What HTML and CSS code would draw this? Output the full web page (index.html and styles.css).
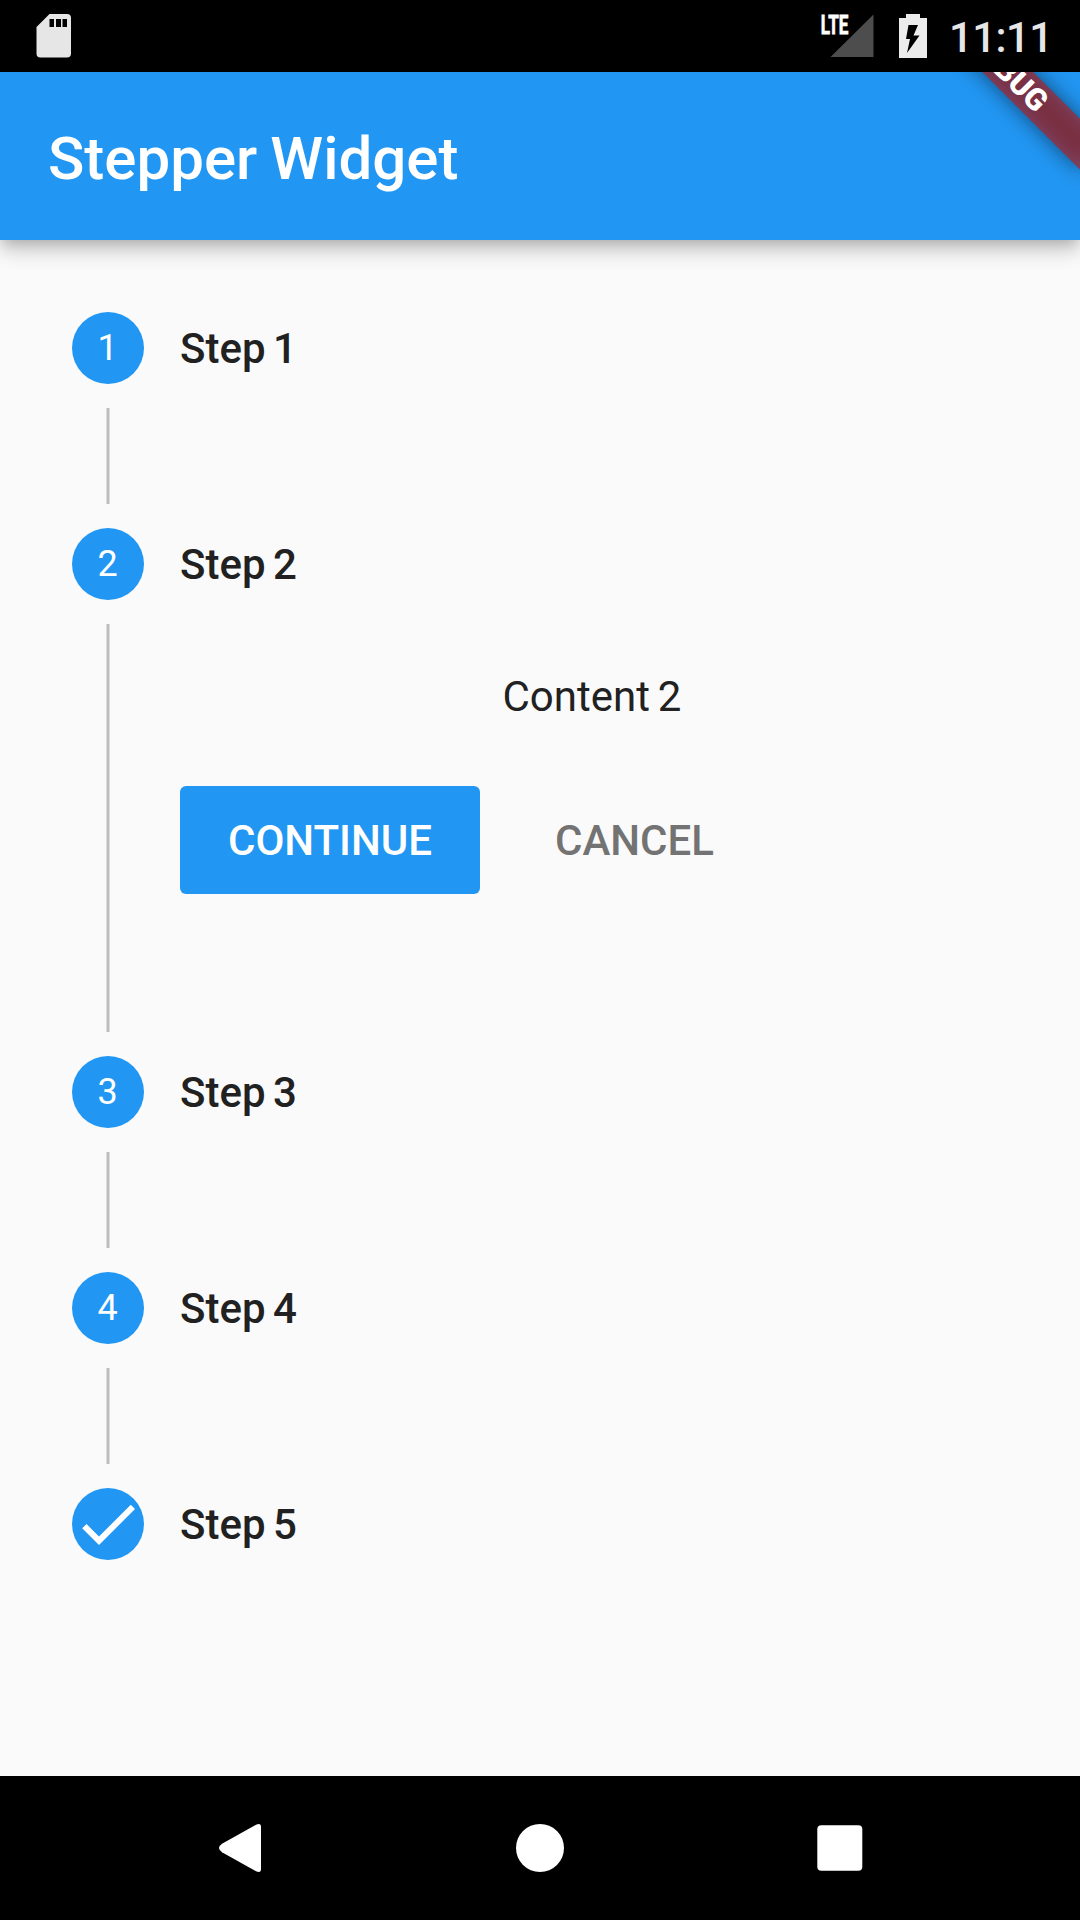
FILE: index.html
```html
<!DOCTYPE html>
<html lang="en">
<head>
<meta charset="utf-8">
<title>Stepper Widget</title>
<link rel="stylesheet" href="styles.css">
</head>
<body>
<div class="status-bar">
  <svg class="icon-sd" width="36" height="44" viewBox="0 0 36 44"><path fill="#e6e6e6" fill-rule="evenodd" d="M13.5 0H31Q35 0 35 4V39.500Q35 43.500 31 43.500H4.500Q.5 43.500 .5 39.500V13ZM13.500 5V13H18V5ZM20 5V13H25V5ZM26.500 5V13H31V5Z"/></svg>
  <div class="status-right">
    <svg class="icon-signal" width="54" height="44" viewBox="0 0 54 44">
      <path fill="#4d4d4d" d="M53.500 .5V43H10.500Z"/>
      <text class="lte" x=".8" y="19.500" textLength="27.500" lengthAdjust="spacingAndGlyphs">LTE</text>
    </svg>
    <svg class="icon-battery" width="28" height="44" viewBox="0 0 28 44"><path fill="#ececec" d="M7 0H21V4H28V44H0V4H7Z"/><path fill="#000" d="M9.500 11H19L14.500 21.500H20.500L8 39L11 25H7Z"/></svg>
    <span class="clock">11:11</span>
  </div>
</div>
<header class="app-bar">
  <h1 class="title">Stepper Widget</h1>
  <div class="banner-clip"><div class="banner"><span class="banner-text">DEBUG</span></div></div>
</header>
<main class="stepper">
  <section class="step">
    <div class="rail"><span class="badge">1</span><span class="line"></span></div>
    <div class="body"><h2 class="name">Step 1</h2></div>
  </section>
  <section class="step step-active">
    <div class="rail"><span class="badge">2</span><span class="line"></span></div>
    <div class="body">
      <h2 class="name">Step 2</h2>
      <p class="content">Content 2</p>
      <div class="actions"><button class="btn btn-primary">CONTINUE</button><button class="btn btn-flat">CANCEL</button></div>
    </div>
  </section>
  <section class="step">
    <div class="rail"><span class="badge">3</span><span class="line"></span></div>
    <div class="body"><h2 class="name">Step 3</h2></div>
  </section>
  <section class="step">
    <div class="rail"><span class="badge">4</span><span class="line"></span></div>
    <div class="body"><h2 class="name">Step 4</h2></div>
  </section>
  <section class="step">
    <div class="rail"><span class="badge badge-done"><svg width="72" height="72" viewBox="0 0 24 24"><path fill="#fff" d="M9 16.170 4.830 12l-1.420 1.410L9 19 21 7l-1.410-1.410z"/></svg></span></div>
    <div class="body"><h2 class="name">Step 5</h2></div>
  </section>
</main>
<nav class="nav-bar">
  <svg width="48" height="48" viewBox="0 0 48 48"><path fill="#fff" d="M40 .8Q45 -1.500 45 3V45Q45 49.500 40 47.200L6 28.200Q0 24 6 19.800Z"/></svg>
  <svg width="48" height="48" viewBox="0 0 48 48"><circle cx="24" cy="24" r="24" fill="#fff"/></svg>
  <svg width="48" height="48" viewBox="0 0 48 48"><rect x="1.300" y="1.300" width="45" height="45.400" rx="4" fill="#fff"/></svg>
</nav>
</body>
</html>
```
FILE: styles.css
```css
* { box-sizing: border-box; }
body {
  margin: 0;
  width: 1080px;
  height: 1920px;
  display: flex;
  flex-direction: column;
  overflow: hidden;
  background: #fafafa;
  color: #212121;
  font-family: Roboto, "Liberation Sans", sans-serif;
}
h1, h2, p { margin: 0; font-weight: 500; }
svg { display: block; overflow: visible; }

.status-bar {
  flex: none;
  height: 72px;
  padding: 14px 27.500px 0 36px;
  display: flex;
  justify-content: space-between;
  background: #000;
}
.status-right { display: flex; }
.icon-battery { margin-left: 25px; }
.lte { font: bold 26px Roboto, sans-serif; fill: #fff; stroke: #fff; stroke-width: .8px; }
.clock {
  margin-left: 21.500px;
  padding-top: 1px;
  font-size: 42px;
  line-height: 45px;
  font-weight: 500;
  letter-spacing: -.6px;
  color: #e6e6e6;
}

.app-bar {
  flex: none;
  position: relative;
  z-index: 1;
  height: 168px;
  padding-left: 48px;
  display: flex;
  align-items: center;
  background: #2196f3;
  box-shadow: 0 6px 12px -3px rgba(0, 0, 0, .17), 0 12px 18px rgba(0, 0, 0, .13), 0 3px 30px rgba(0, 0, 0, .08);
  clip-path: inset(0 0 -60px 0);
}
.title { font-size: 60px; line-height: 70px; padding-top: 6px; word-spacing: -1.800px; color: #fff; }

/* Diagonal ribbon laid over the top right corner */
.banner-clip { position: absolute; inset: 0; overflow: hidden; }
.banner {
  position: absolute;
  left: 960px;
  top: 12px;
  width: 240px;
  height: 36px;
  display: flex;
  align-items: center;
  justify-content: center;
  transform-origin: 120px -84px;
  transform: rotate(45deg);
}
.banner::before {
  content: "";
  position: absolute;
  inset: 0;
  background: rgba(0, 0, 0, .5);
  filter: blur(10.900px);
}
.banner::after {
  content: "";
  position: absolute;
  inset: 0;
  background: rgba(183, 28, 28, .627);
}
.banner-text {
  position: relative;
  z-index: 1;
  font-size: 30.600px;
  line-height: 30.600px;
  font-weight: 900;
  color: #fff;
}

.stepper { flex: 1; padding: 72px 72px 0; }
.step { display: flex; gap: 36px; height: 216px; }
.step-active { height: 528px; }
.rail {
  width: 72px;
  padding-bottom: 24px;
  display: flex;
  flex-direction: column;
  align-items: center;
  gap: 24px;
}
.badge {
  flex: none;
  width: 72px;
  height: 72px;
  padding-right: 1px;
  border-radius: 50%;
  display: grid;
  place-items: center;
  background: #2196f3;
  color: #fff;
  font-size: 36px;
  line-height: 42px;
}
.badge-done { padding: 0; }
.line {
  flex: 1;
  width: 4px;
  background: #bdbdbd;
  border: solid #dcdcdc;
  border-width: 0 1px;
}
.body { flex: 1; }
.name { font-size: 42px; line-height: 72px; padding-top: 1px; word-spacing: -3px; }
.content {
  margin-top: 71px;
  padding-right: 4px;
  font-size: 42px;
  line-height: 49px;
  font-weight: 400;
  text-align: center;
  word-spacing: -2.500px;
}
.actions { display: flex; gap: 24px; margin-top: 65px; }
.btn {
  border: 0;
  border-radius: 6px;
  height: 108px;
  padding: 0;
  font: 500 42px/49px Roboto, sans-serif;
}
.btn-primary { width: 300px; background: #2196f3; color: #fff; }
.btn-flat { width: 261px; background: none; color: #737373; }

.nav-bar {
  flex: none;
  height: 144px;
  display: flex;
  align-items: center;
  justify-content: center;
  gap: 252px;
  background: #000;
}
```
